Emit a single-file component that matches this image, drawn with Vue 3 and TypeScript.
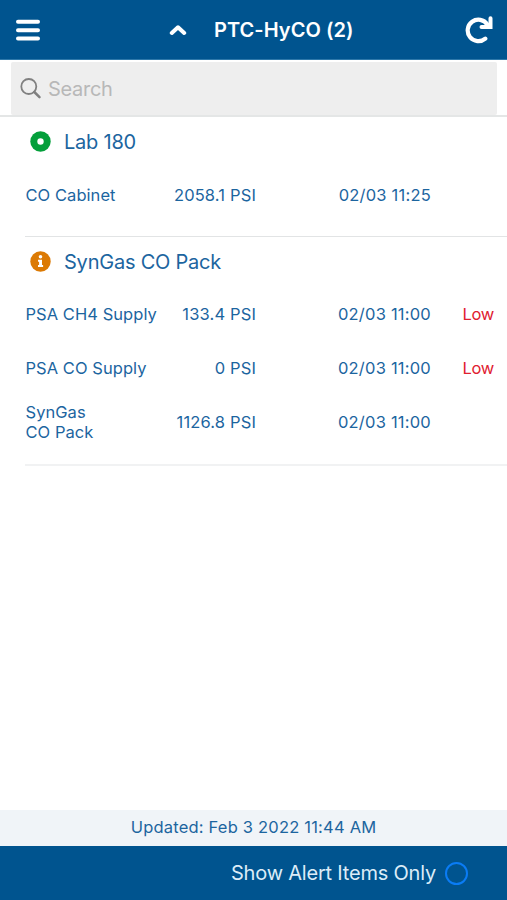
<script setup lang="ts">
import { ref } from 'vue'

interface Reading {
  name: string
  value: string
  time: string
  alert?: string
}

interface Site {
  title: string
  status: 'ok' | 'warning'
  readings: Reading[]
}

const search = ref('')
const alertsOnly = ref(false)

const sites: Site[] = [
  {
    title: 'Lab 180',
    status: 'ok',
    readings: [{ name: 'CO Cabinet', value: '2058.1 PSI', time: '02/03 11:25' }],
  },
  {
    title: 'SynGas CO Pack',
    status: 'warning',
    readings: [
      { name: 'PSA CH4 Supply', value: '133.4 PSI', time: '02/03 11:00', alert: 'Low' },
      { name: 'PSA CO Supply', value: '0 PSI', time: '02/03 11:00', alert: 'Low' },
      { name: 'SynGas\nCO Pack', value: '1126.8 PSI', time: '02/03 11:00' },
    ],
  },
]
</script>

<template>
  <div class="screen">
    <header class="topbar">
      <button class="icon-button" aria-label="Menu">
        <svg width="26" height="24" viewBox="0 0 26 24">
          <path d="M3 3.800h20M3 12.200h20M3 20.600h20" stroke="#fff" stroke-width="4" stroke-linecap="round" />
        </svg>
      </button>
      <div class="location">
        <svg width="18" height="12" viewBox="0 0 18 12">
          <path d="M2.800 9 9 3.300 15.200 9" fill="none" stroke="#fff" stroke-width="4" stroke-linecap="round" stroke-linejoin="round" />
        </svg>
        <h1>PTC-HyCO (2)</h1>
      </div>
      <button class="icon-button" aria-label="Refresh">
        <svg width="28" height="28" viewBox="0 0 28 28">
          <path d="M20.300 22.600A10.700 10.700 0 1 1 22.300 8.500" fill="none" stroke="#fff" stroke-width="4.200" stroke-linecap="round" />
          <path d="M25.500 2.200v8.900H16.500" fill="none" stroke="#fff" stroke-width="4" stroke-linecap="round" stroke-linejoin="miter" />
        </svg>
      </button>
    </header>

    <div class="search-row">
      <label class="search">
        <svg width="22" height="22" viewBox="0 0 22 22" fill="none" stroke="#808080">
          <circle cx="8.800" cy="8.500" r="7.500" stroke-width="1.800" />
          <path d="m14.300 14 5.200 5.200" stroke-width="2.500" stroke-linecap="round" />
        </svg>
        <input v-model="search" type="text" placeholder="Search" />
      </label>
    </div>

    <main>
      <section v-for="site in sites" :key="site.title" class="site">
        <h2>
          <svg v-if="site.status === 'ok'" width="21" height="21" viewBox="0 0 21 21">
            <circle cx="10.500" cy="10.500" r="10.200" fill="#049f3b" />
            <circle cx="10.500" cy="10.500" r="3.200" fill="#fff" />
          </svg>
          <svg v-else width="21" height="21" viewBox="0 0 21 21">
            <circle cx="10.500" cy="10.500" r="10.200" fill="#dc7a04" />
            <circle cx="10.500" cy="5.800" r="1.800" fill="#fff" />
            <path d="M8 8.700h4v5.300h1.100v2H8v-2h1.100v-3.300H8z" fill="#fff" />
          </svg>
          <span>{{ site.title }}</span>
        </h2>
        <div v-for="reading in site.readings" :key="reading.name" class="reading">
          <span class="name">{{ reading.name }}</span>
          <span class="value">{{ reading.value }}</span>
          <span class="time">{{ reading.time }}</span>
          <span class="alert">{{ reading.alert }}</span>
        </div>
      </section>
    </main>

    <div class="updated">Updated: Feb 3 2022 11:44 AM</div>
    <footer>
      <span>Show Alert Items Only</span>
      <button class="toggle" :class="{ on: alertsOnly }" aria-label="Show alert items only" @click="alertsOnly = !alertsOnly"></button>
    </footer>
  </div>
</template>

<style>
body {
  margin: 0;
  background: #fff;
}
</style>

<style scoped>
.screen {
  display: flex;
  flex-direction: column;
  height: 100vh;
  font-family: Inter, "Liberation Sans", sans-serif;
  color: #1c659f;
  background: #fff;
}

button {
  padding: 0;
  border: 0;
  background: none;
}

svg {
  display: block;
  flex: none;
}

.topbar {
  display: flex;
  align-items: center;
  box-sizing: border-box;
  height: 60px;
  padding: 0 14px 0 15px;
  background: #00548f;
  border-bottom: 1px solid #2d78aa;
}

.location {
  display: flex;
  flex: 1;
  align-items: center;
  gap: 27px;
  padding-left: 128px;
}

h1 {
  margin: 0;
  font-size: 20px;
  font-weight: 600;
  line-height: 24px;
  letter-spacing: 0.050px;
  color: #fff;
}

.search-row {
  box-sizing: border-box;
  height: 57px;
  padding: 2px 10px 0 11px;
  border-bottom: 2px solid #e4e6e6;
}

.search {
  display: flex;
  align-items: center;
  gap: 6px;
  height: 53px;
  padding-left: 9px;
  border-radius: 2px;
  background: #eee;
}

.search input {
  flex: 1;
  min-width: 0;
  padding: 0;
  border: 0;
  outline: 0;
  background: none;
  font: 20px Inter, "Liberation Sans", sans-serif;
  letter-spacing: -0.300px;
  color: #555;
}

.search input::placeholder {
  color: #b8b8b8;
}

main {
  flex: 1;
}

.site {
  margin-left: 25px;
  padding-bottom: 14px;
  border-bottom: 1px solid #e2e4e5;
}

.site:last-child {
  padding-bottom: 15px;
  border-bottom: 2px solid #f1f2f3;
}

h2 {
  display: flex;
  align-items: center;
  gap: 13px;
  height: 49px;
  margin: 0;
  padding: 0 0 2px 5px;
  font-size: 20px;
  font-weight: 400;
  letter-spacing: -0.220px;
}

.site:last-child h2 {
  padding-bottom: 1px;
}

.reading {
  display: grid;
  grid-template-columns: 135px 96px 175px 63px;
  align-items: center;
  height: 54px;
  font-size: 16.500px;
  line-height: 20.500px;
}

.name {
  padding-left: 0.500px;
  letter-spacing: 0.050px;
  white-space: pre-line;
}

.value,
.time,
.alert {
  text-align: right;
}

.value {
  letter-spacing: 0.150px;
}

.time {
  letter-spacing: 0.220px;
}

.alert {
  letter-spacing: -0.300px;
  color: #e02030;
}

.updated {
  height: 36px;
  line-height: 35px;
  text-align: center;
  font-size: 16.500px;
  letter-spacing: 0.200px;
  background: #f0f4f8;
}

footer {
  display: flex;
  align-items: center;
  justify-content: flex-end;
  gap: 9px;
  height: 54px;
  padding-right: 39px;
  background: #00548f;
  font-size: 20px;
  letter-spacing: -0.200px;
  color: #dcecf8;
}

.toggle {
  box-sizing: border-box;
  width: 23px;
  height: 23px;
  border: 2.500px solid #0a7cf5;
  border-radius: 50%;
}

.toggle.on {
  background: #0a7cf5;
}
</style>
